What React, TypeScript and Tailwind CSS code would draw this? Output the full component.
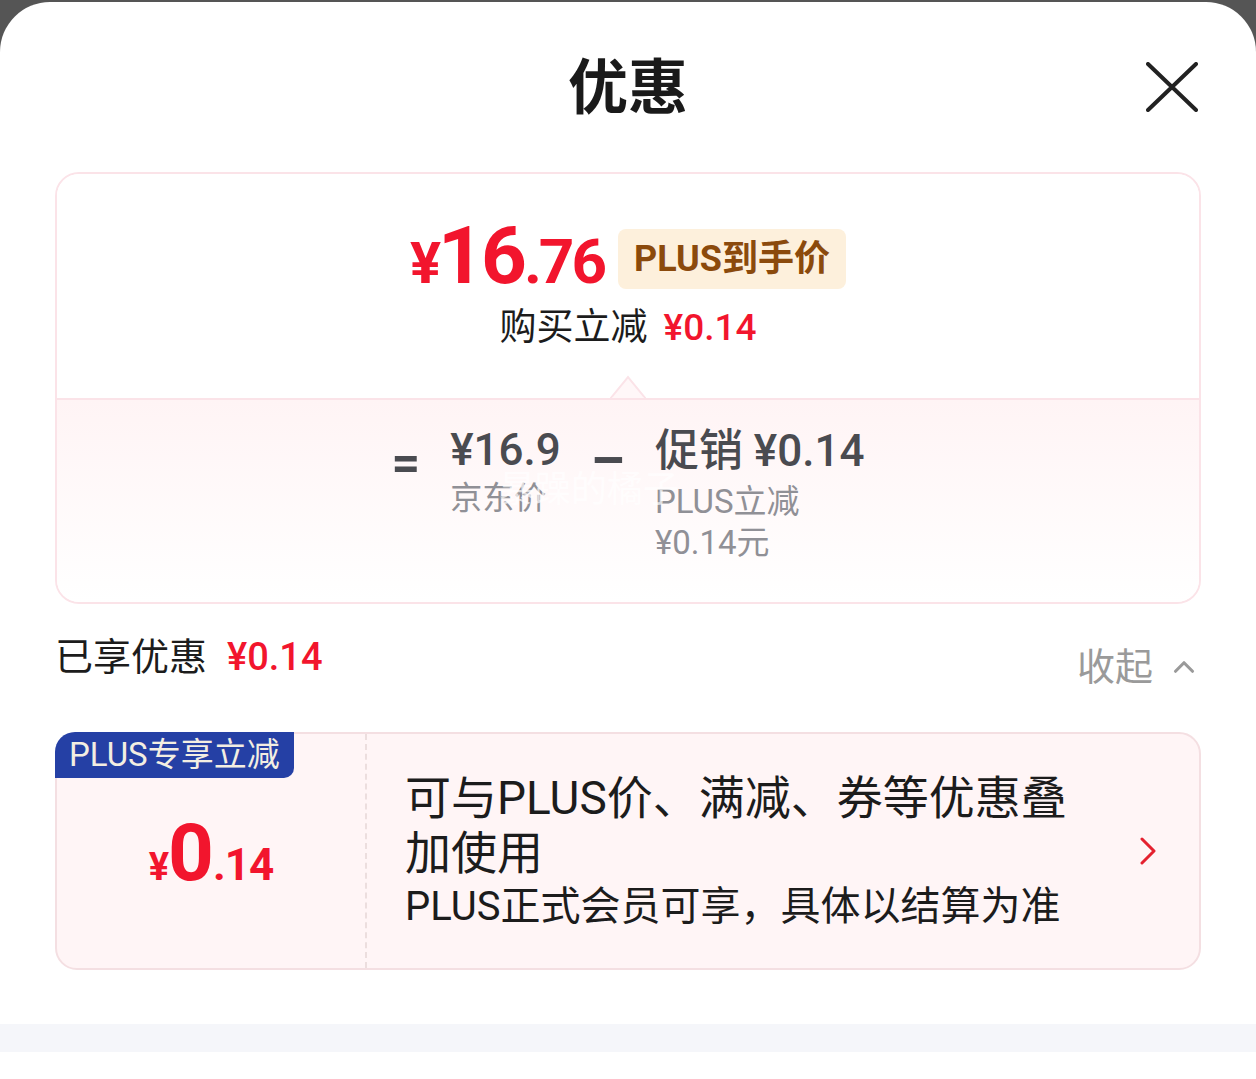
import { ChevronUp } from "lucide-react";

const cjk = "font-['Roboto','Noto_Sans_CJK_SC',sans-serif]";

function PriceSummary() {
  return (
    <div className="overflow-hidden rounded-[24px] border-2 border-[#fbe3e8]">
      <div className="relative flex h-[224px] flex-col items-center bg-white pt-[42px]">
        <div className="flex items-center gap-[14px]">
          <div className="flex items-baseline font-bold leading-none tracking-[-3px] text-[#f2152d]">
            <span className="text-[58px]">¥</span>
            <span className="text-[80px]">16</span>
            <span className="text-[62px]">.76</span>
          </div>
          <div className="mt-[6px] rounded-[8px] bg-[#fdf0dc] px-[16px] text-[36px] font-bold leading-[60px] text-[#8b4a0c]">
            PLUS到手价
          </div>
        </div>
        <div className="mt-[10px] flex items-center gap-[16px] text-[37px] leading-[44px] text-[#1c1c1c]">
          <span>购买立减</span>
          <span className="font-medium text-[#f2152d]">¥0.14</span>
        </div>
        <div className="absolute bottom-[-1px] left-1/2 h-[24px] w-[36px] -translate-x-1/2">
          <svg viewBox="0 0 36 24" className="h-full w-full">
            <path d="M0 24 L18 2 L36 24 Z" fill="#fff7f8" stroke="#fbe3e8" strokeWidth="2" />
            <path d="M2 24 L34 24" stroke="#fff7f8" strokeWidth="3" />
          </svg>
        </div>
      </div>
      <div className="relative flex h-[204px] justify-center border-t-2 border-[#fbe3e8] bg-gradient-to-b from-[#fff4f5] to-white pt-[26px] text-[#4a4b50]">
        <span className="mr-[30px] mt-[12px] text-[50px] font-bold leading-none">=</span>
        <div className="mr-[30px] flex flex-col">
          <span className="text-[44px] font-medium leading-[48px]">¥16.9</span>
          <span className="mt-[6px] text-[32px] leading-[36px] text-[#909096]">京东价</span>
        </div>
        <span className="mr-[30px] mt-[8px] text-[54px] font-bold leading-none">–</span>
        <div className="flex flex-col">
          <span className="text-[44px] font-medium leading-[50px]">促销 ¥0.14</span>
          <span className="mt-[6px] text-[33px] leading-[40px] text-[#909096]">PLUS立减</span>
          <span className="text-[33px] leading-[42px] text-[#909096]">¥0.14元</span>
        </div>
        <span className="pointer-events-none absolute left-[442px] top-[72px] text-[36px] leading-none text-white/70">
          暴躁的橘子
        </span>
      </div>
    </div>
  );
}

function PlusCoupon() {
  return (
    <div className="relative flex h-[238px] rounded-[22px] border-2 border-[#f4dfe2] bg-[#fff5f6]">
      <div className="absolute left-[-2px] top-[-2px] rounded-tl-[20px] rounded-br-[10px] bg-[#2540a5] px-[14px] text-[33px] leading-[46px] text-[#f3eee2]">
        PLUS专享立减
      </div>
      <div className="flex w-[310px] items-center justify-center border-r-2 border-dashed border-[#ecdede] pt-[4px]">
        <div className="flex items-baseline font-bold leading-none tracking-[-1px] text-[#f2152d]">
          <span className="text-[38px]">¥</span>
          <span className="text-[80px]">0</span>
          <span className="text-[44px]">.14</span>
        </div>
      </div>
      <div className="flex flex-1 items-center pl-[38px] pr-[43px]">
        <div className="flex-1">
          <p className="text-[46px] leading-[55px] text-[#1c1c1c]">
            可与PLUS价、满减、券等优惠叠
            <br />
            加使用
          </p>
          <p className="mt-[2px] text-[40px] leading-[48px] text-[#1c1c1c]">
            PLUS正式会员可享，具体以结算为准
          </p>
        </div>
        <svg viewBox="0 0 16 28" className="h-[28px] w-[16px]" fill="none">
          <path d="M2 2 L14 14 L2 26" stroke="#e4212f" strokeWidth="3" strokeLinecap="round" strokeLinejoin="round" />
        </svg>
      </div>
    </div>
  );
}

export default function App() {
  return (
    <div className={`min-h-[1079px] w-[1256px] bg-[#555555] pt-[2px] ${cjk}`}>
      <div className="min-h-[1077px] rounded-t-[50px] bg-white">
        <div className="relative flex h-[170px] items-start justify-center pt-[54px]">
          <h1 className="text-[60px] font-bold leading-[66px] text-[#1a1a1a]">优惠</h1>
          <svg viewBox="0 0 52 50" className="absolute right-[58px] top-[60px] h-[50px] w-[52px]" fill="none">
            <path d="M2 2 L50 48 M50 2 L2 48" stroke="#222" strokeWidth="4" strokeLinecap="round" />
          </svg>
        </div>
        <div className="px-[55px]">
          <PriceSummary />
          <div className="flex items-start justify-between pt-[28px]">
            <div className="flex items-center gap-[20px] text-[38px] leading-[50px] text-[#1c1c1c]">
              <span>已享优惠</span>
              <span className="font-medium text-[#f2152d]">¥0.14</span>
            </div>
            <div className="mt-[10px] flex items-center gap-[14px] text-[38px] leading-[50px] text-[#9a9a9a]">
              <span>收起</span>
              <ChevronUp className="size-[34px]" strokeWidth={2.2} />
            </div>
          </div>
          <div className="mt-[40px]">
            <PlusCoupon />
          </div>
        </div>
        <div className="mt-[54px] h-[28px] bg-[#f5f6fa]" />
      </div>
    </div>
  );
}
